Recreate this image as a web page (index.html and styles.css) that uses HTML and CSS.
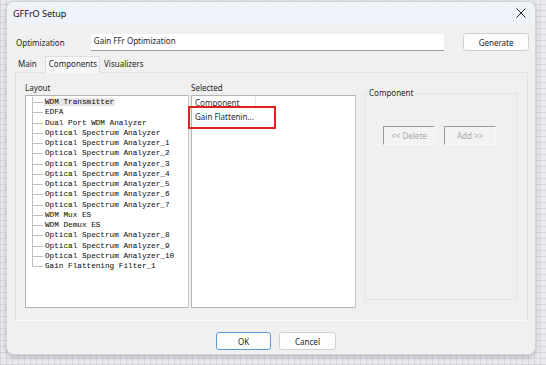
FILE: index.html
```html
<!DOCTYPE html>
<html lang="en">
<head>
  <meta charset="UTF-8">
  <title>GFFrO Setup</title>
  <link rel="stylesheet" href="styles.css">
</head>
<body>

  <div class="desk">
    <div class="dialog">
      <div class="titlebar">
        <span class="title">GFFrO Setup</span>
        <svg class="close" width="10" height="10" viewBox="0 0 10 10">
          <path d="M0.5 0.5 L9.5 9.5 M9.5 0.5 L0.5 9.5" stroke="#222" stroke-width="1"/>
        </svg>
      </div>

      <div class="content">
        <div class="opt-row">
          <label class="opt-label">Optimization</label>
          <div class="opt-input">Gain FFr Optimization</div>
          <button class="button generate">Generate</button>
        </div>

        <div class="tabs">
          <span class="tab">Main</span>
          <span class="tab active">Components</span>
          <span class="tab">Visualizers</span>
        </div>

        <div class="panel">
          <div class="col layout-col">
            <div class="col-label">Layout</div>
            <div class="listbox tree">
              <div class="tree-item first"><span class="hl">WDM Transmitter</span></div>
              <div class="tree-item">EDFA</div>
              <div class="tree-item">Dual Port WDM Analyzer</div>
              <div class="tree-item">Optical Spectrum Analyzer</div>
              <div class="tree-item">Optical Spectrum Analyzer_1</div>
              <div class="tree-item">Optical Spectrum Analyzer_2</div>
              <div class="tree-item">Optical Spectrum Analyzer_3</div>
              <div class="tree-item">Optical Spectrum Analyzer_4</div>
              <div class="tree-item">Optical Spectrum Analyzer_5</div>
              <div class="tree-item">Optical Spectrum Analyzer_6</div>
              <div class="tree-item">Optical Spectrum Analyzer_7</div>
              <div class="tree-item">WDM Mux ES</div>
              <div class="tree-item">WDM Demux ES</div>
              <div class="tree-item">Optical Spectrum Analyzer_8</div>
              <div class="tree-item">Optical Spectrum Analyzer_9</div>
              <div class="tree-item">Optical Spectrum Analyzer_10</div>
              <div class="tree-item last">Gain Flattening Filter_1</div>
            </div>
          </div>

          <div class="col selected-col">
            <div class="col-label">Selected</div>
            <div class="listbox selected">
              <div class="list-head"><span class="head-cell">Component</span></div>
              <div class="list-row">Gain Flattenin...</div>
              <div class="mark"></div>
            </div>
          </div>

          <fieldset class="group">
            <legend>Component</legend>
            <div class="group-buttons">
              <button class="button disabled">&lt;&lt; Delete</button>
              <button class="button disabled">Add &gt;&gt;</button>
            </div>
          </fieldset>
        </div>

        <div class="footer">
          <button class="button ok">OK</button>
          <button class="button cancel">Cancel</button>
        </div>
      </div>
    </div>
  </div>

</body>
</html>
```

FILE: styles.css
```css
body {
  margin: 0;
  width: 546px;
  height: 365px;
  overflow: hidden;
  font-family: "Noto Sans", "Open Sans", sans-serif;
  font-size: 8px;
  color: #262626;
}

.desk {
  width: 546px;
  height: 365px;
  box-sizing: border-box;
  padding: 1px 10px 12px 6px;
  background-color: #e9e9ee;
  background-image:
    repeating-linear-gradient(90deg, rgba(160,160,180,0.25) 0 1px, transparent 1px 6px),
    repeating-linear-gradient(0deg, rgba(160,160,180,0.25) 0 1px, transparent 1px 6px);
}

.dialog {
  height: 100%;
  background-color: #f0f0f0;
  border: 1px solid #d4d4d4;
  border-radius: 8px;
  box-shadow: 0 2px 5px rgba(0, 0, 0, 0.2);
  overflow: hidden;
  display: flex;
  flex-direction: column;
}

.titlebar {
  height: 22px;
  flex: none;
  display: flex;
  align-items: center;
  justify-content: space-between;
  padding: 0 9px 0 6px;
  background-color: #eef2f9;
}

.title {
  font-size: 9px;
  color: #111;
}

.content {
  flex: 1;
  display: flex;
  flex-direction: column;
  padding: 0 6px 0 8px;
}

/* Optimization row */
.opt-row {
  display: flex;
  align-items: center;
  margin-top: 9px;
  height: 18px;
}

.opt-label {
  width: 75px;
  padding-left: 1px;
}

.opt-input {
  width: 354px;
  height: 17px;
  box-sizing: border-box;
  background-color: #fff;
  border-bottom: 1px solid #9a9a9a;
  padding: 0 0 0 3px;
  line-height: 13px;
}

.button {
  font-family: "Noto Sans", "Open Sans", sans-serif;
  font-size: 8px;
  color: #262626;
  background-color: #fdfdfd;
  border: 1px solid #d0d0d0;
  border-radius: 3px;
  height: 18px;
  padding: 0;
}

.generate {
  width: 66px;
  margin-left: 19px;
}

/* Tabs */
.tabs {
  display: flex;
  align-items: flex-end;
  margin-top: 5px;
  height: 16px;
}

.tab {
  padding: 0 4px 2px 4px;
  line-height: 12px;
}

.tab:first-child {
  padding-left: 3px;
  margin-right: 4px;
}

.tab.active {
  background-color: #f8f8f8;
  border: 1px solid #dcdcdc;
  border-bottom: none;
  padding: 1px 2px 3px 3px;
  margin-bottom: -1px;
  position: relative;
  z-index: 1;
}

.panel {
  width: 513px;
  height: 249px;
  box-sizing: border-box;
  border: 1px solid #e2e2e2;
  border-bottom-color: #fafafa;
  background-color: #f0f0f0;
  display: flex;
  padding: 9px 0 0 9px;
}

.col {
  display: flex;
  flex-direction: column;
}

.col-label {
  height: 13px;
  line-height: 11px;
}

.listbox {
  background-color: #fff;
  border: 1px solid #b5b5b5;
  border-right-color: #c8c8c8;
  box-sizing: border-box;
  height: 213px;
}

.layout-col .listbox {
  width: 164px;
}

.selected-col {
  margin-left: 2px;
}

.selected-col .listbox {
  width: 165px;
  position: relative;
}

/* Tree */
.tree {
  padding: 1px 0 0 6px;
  font-family: "Liberation Mono", monospace;
  font-size: 7.7px;
  color: #111;
  -webkit-text-stroke: 0.05px #111;
}

.tree-item {
  position: relative;
  height: 10.25px;
  line-height: 10.25px;
  padding-left: 12px;
  border-left: 1px solid #c0c0c0;
  white-space: nowrap;
}

.tree-item.last {
  border-left-color: transparent;
}

.tree-item::before {
  content: "";
  position: absolute;
  left: 0;
  top: 5px;
  width: 10px;
  border-top: 1px solid #c0c0c0;
}

.tree-item.last::after {
  content: "";
  position: absolute;
  left: -1px;
  top: 0;
  height: 6px;
  border-left: 1px solid #c0c0c0;
}

.hl {
  background-color: #e6e6e6;
  padding: 0 1px;
  margin-left: -1px;
}

/* Selected list */
.selected {
  padding: 1px 0 0 3px;
}

.list-head {
  height: 12px;
  line-height: 12px;
}

.head-cell {
  display: inline-block;
  width: 60px;
  border-right: 1px solid #e6e6e6;
  color: #333;
}

.list-row {
  height: 13px;
  line-height: 13px;
  margin-top: 1px;
}

.mark {
  position: absolute;
  left: -4px;
  top: 10px;
  width: 84px;
  height: 19px;
  border: 2px solid #e3201c;
}

/* Component group */
.group {
  margin: 0 0 0 8px;
  width: 153px;
  height: 212px;
  box-sizing: border-box;
  border: 1px solid #e4e4e4;
  padding: 0;
  margin-top: 6px;
}

.group legend {
  padding: 0 1px;
  margin-left: 3px;
  line-height: 10px;
}

.group-buttons {
  display: flex;
  justify-content: center;
  gap: 9px;
  margin-top: 28px;
  padding-right: 2px;
}

.button.disabled {
  width: 52px;
  height: 19px;
  border-radius: 0;
  color: #a8a8a8;
  background-color: #f3f3f3;
  border: 1px solid #f8f8f8;
  border-top-color: #9a9a9a;
  border-left-color: #9a9a9a;
}

/* Footer */
.footer {
  display: flex;
  gap: 8px;
  margin-top: 11px;
  padding-left: 201px;
}

.ok {
  width: 55px;
  border-color: #5b9bd5;
}

.cancel {
  width: 57px;
}
```
